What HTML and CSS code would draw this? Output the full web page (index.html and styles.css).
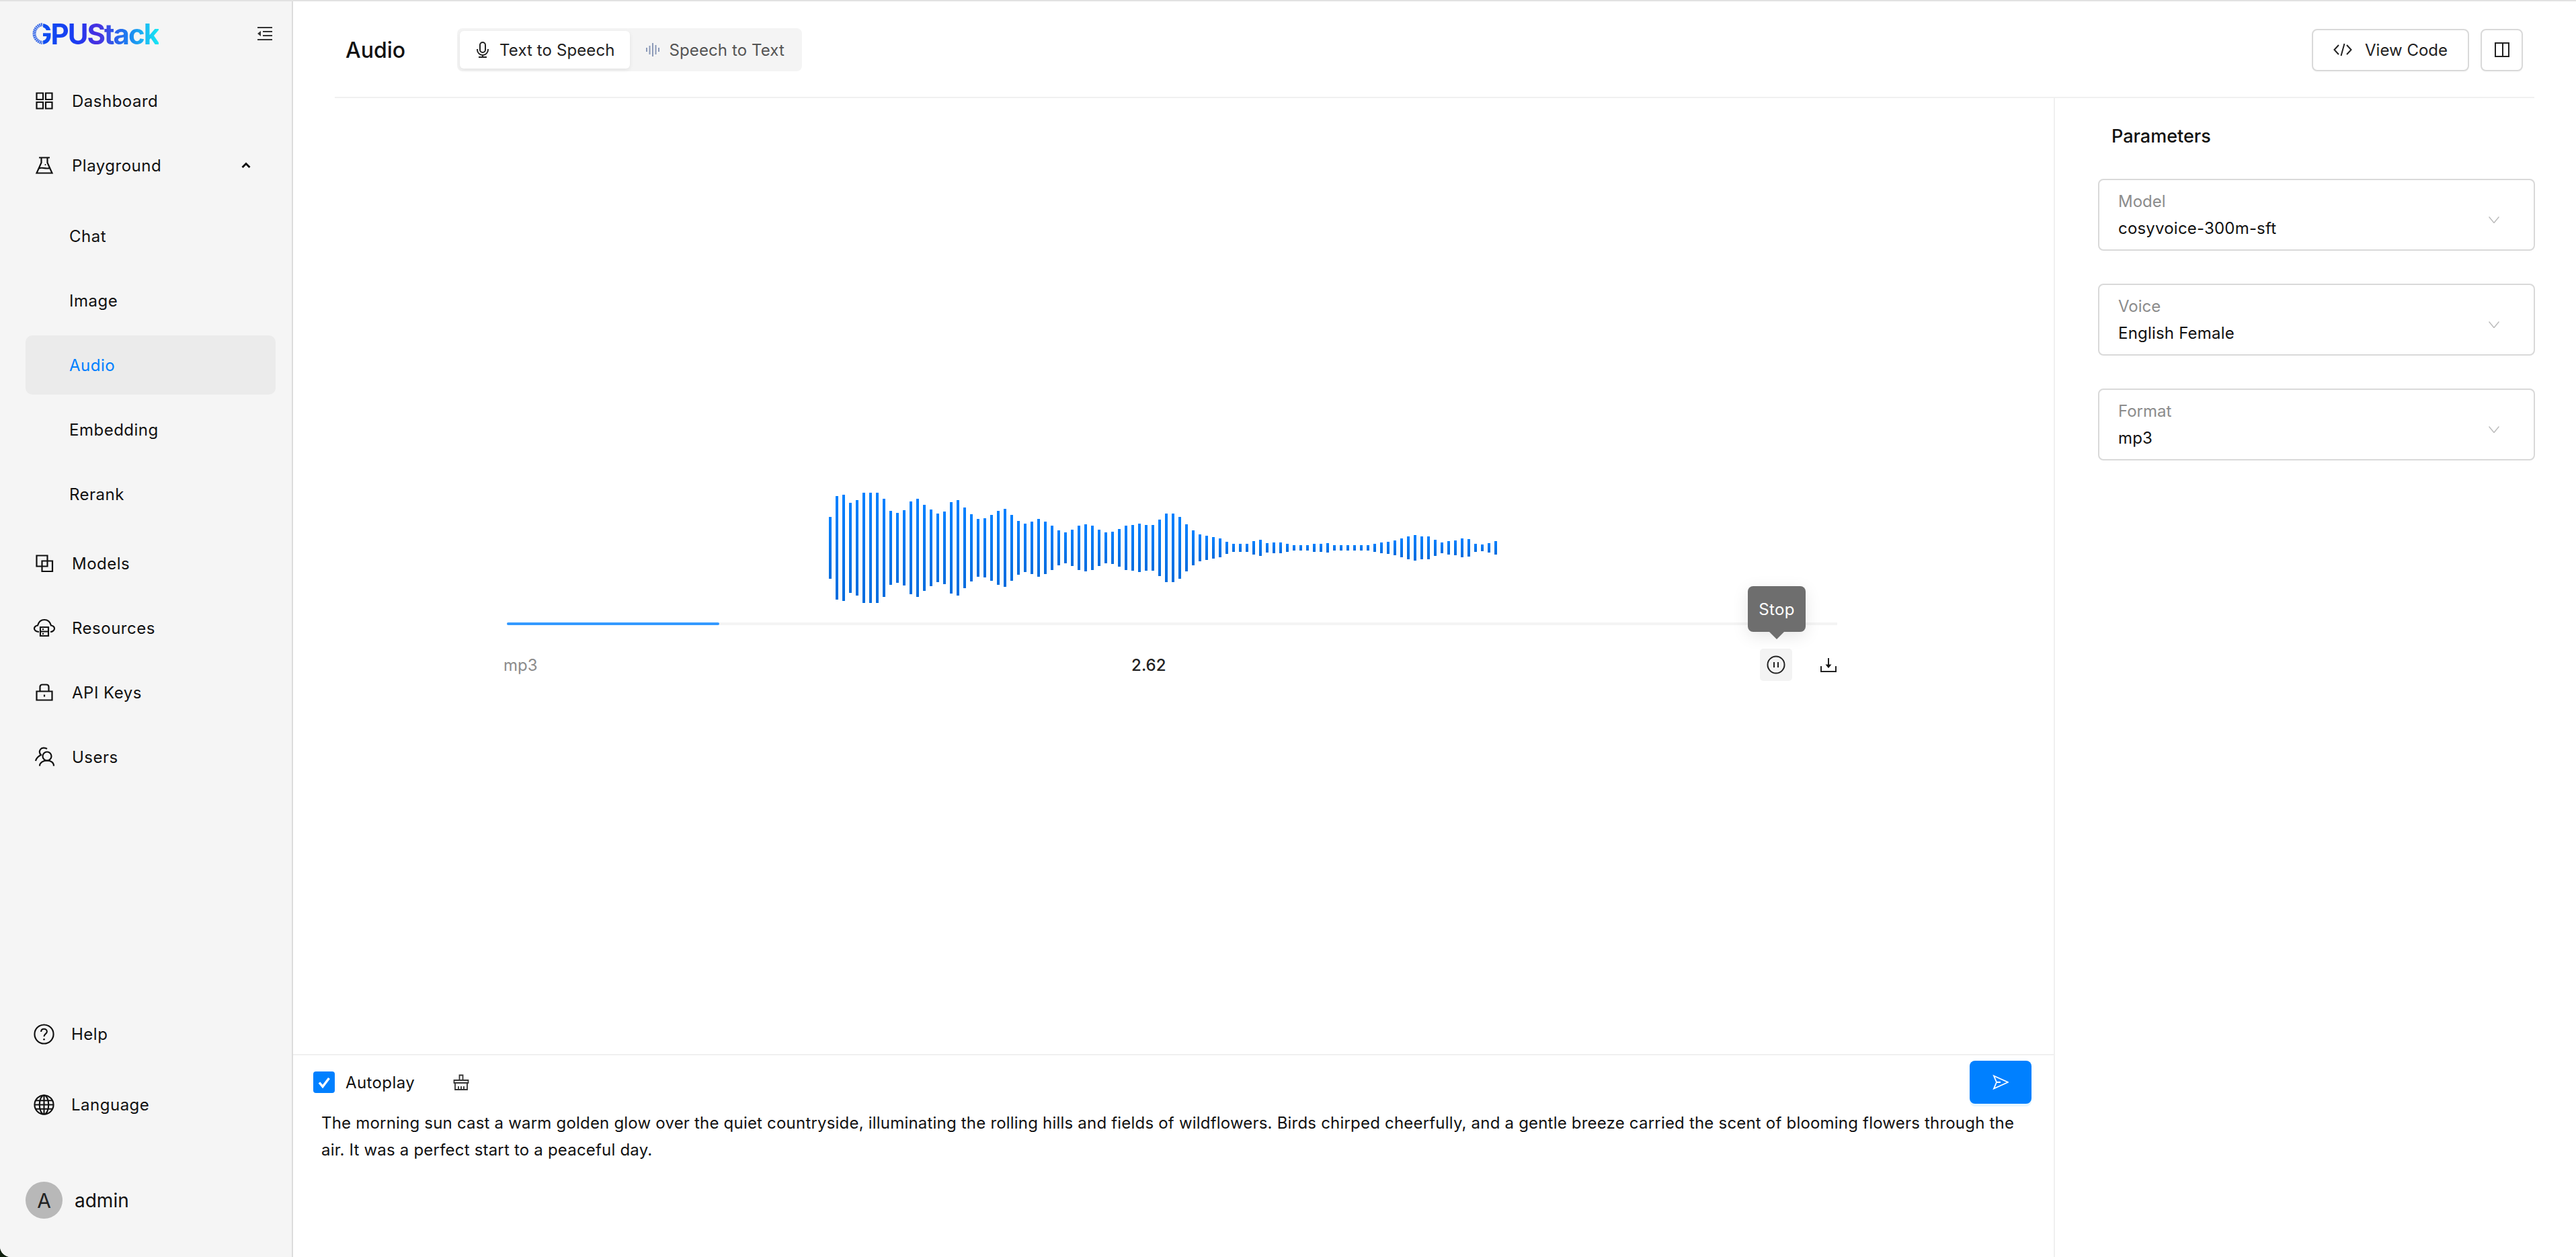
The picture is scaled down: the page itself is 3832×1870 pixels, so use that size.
FILE: index.html
```html
<!DOCTYPE html>
<html lang="en">
<head>
  <meta charset="UTF-8">
  <title>GPUStack - Audio</title>
  <link rel="stylesheet" href="styles.css">
</head>
<body>

  <div class="app">

    <aside class="sidebar">
      <div class="brand">
        <div class="logo">
          <span class="logo-text">GPUStack</span>
          <svg class="logo-ring" viewBox="0 0 18 34">
            <rect width="18" height="34" fill="#f5f5f5"/>
            <path d="M17 3.500A13.600 13.600 0 0 0 17 30.500" fill="none" stroke="#3d6de8" stroke-width="5" stroke-dasharray="2 .7"/>
          </svg>
        </div>
        <svg class="collapse-icon" viewBox="0 0 22 20">
          <path d="M0 1h22M8 7h14M8 13h14M0 19h22" fill="none" stroke="#333" stroke-width="2"/>
          <path d="M0 10l5-4v8z" fill="#333"/>
        </svg>
      </div>

      <nav class="nav">
        <a class="nav-item">
          <svg class="nav-icon" viewBox="0 0 26 26"><path d="M1.500 1.500h9.500v9.500H1.500zM15 1.500h9.500v9.500H15zM1.500 15h9.500v9.500H1.500zM15 15h9.500v9.500H15z"/></svg>
          Dashboard
        </a>
        <a class="nav-item">
          <svg class="nav-icon" viewBox="0 0 26 26"><path d="M5 1.500h16M8.500 1.500v7.500L1.500 24.500h23L17.500 9V1.500M5 17.500c5-2.500 10 1.500 16-.5"/><circle cx="14.500" cy="12" r="1" fill="#111" stroke="none"/></svg>
          Playground
          <svg class="nav-chevron" viewBox="0 0 14 10"><path d="M1.500 8L7 2.500 12.500 8"/></svg>
        </a>
        <div class="subnav">
          <a class="nav-item sub-item">Chat</a>
          <a class="nav-item sub-item">Image</a>
          <a class="nav-item sub-item active">Audio</a>
          <a class="nav-item sub-item">Embedding</a>
          <a class="nav-item sub-item">Rerank</a>
        </div>
        <a class="nav-item">
          <svg class="nav-icon" viewBox="0 0 26 26"><path d="M1.500 1.500h16v16h-16zM9.500 9.500h15.500v15.500H9.500z"/></svg>
          Models
        </a>
        <a class="nav-item">
          <svg class="nav-icon nav-icon-wide" viewBox="0 0 32 26"><path d="M8 19C3.500 19 1 16.500 1 14s2.500-4.500 5-4.500C7.500 4 11 1 16 1s8.500 3 10 8.500c2.500 0 5 2 5 4.500s-2.500 5-6 5"/><path d="M10 12h12v13H10zM10 18.500h12M13 15.200h2M13 21.800h2"/></svg>
          Resources
        </a>
        <a class="nav-item">
          <svg class="nav-icon" viewBox="0 0 26 26"><path d="M1.500 11.500h23v13h-23zM6.500 11.500V5c0-2 1.500-3.500 3.500-3.500h6c2 0 3.500 1.500 3.500 3.500v6.500M13 16.500v3"/></svg>
          API Keys
        </a>
        <a class="nav-item">
          <svg class="nav-icon nav-icon-user" viewBox="0 0 28 28"><circle cx="18" cy="13" r="6.500"/><path d="M7 27.500c0-5 5-8 11-8s10 3 10 8M18 2C15 0 10 0 8 3c-2 3-1 6 1 8-4 2-7 5-8 9"/></svg>
          Users
        </a>
      </nav>

      <div class="sidebar-foot">
        <a class="nav-item">
          <svg class="nav-icon" viewBox="0 0 32 32"><circle cx="16" cy="16" r="14.500"/><path d="M11.500 12.500c0-3 2-4.500 4.500-4.500s4.500 1.700 4.500 4.200c0 3.500-4.500 3.500-4.500 7.300"/><circle cx="16" cy="24" r="1.400" fill="#111" stroke="none"/></svg>
          Help
        </a>
        <a class="nav-item">
          <svg class="nav-icon" viewBox="0 0 32 32"><circle cx="16" cy="16" r="14.500"/><ellipse cx="16" cy="16" rx="7" ry="14.500"/><path d="M16 1.500v29M3 9.500h26M1.500 16h29M3 22.500h26"/></svg>
          Language
        </a>
        <div class="user">
          <span class="avatar">A</span>
          <span class="user-name">admin</span>
        </div>
      </div>
    </aside>

    <main class="main">
      <header class="topbar">
        <h1 class="page-title">Audio</h1>
        <div class="segmented">
          <div class="segment selected">
            <svg class="seg-icon" viewBox="0 0 20 24"><path d="M6 5a4 4 0 0 1 8 0v7a4 4 0 0 1-8 0zM2 11v1a8 8 0 0 0 16 0v-1M10 20v3M4 23h12"/></svg>
            Text to Speech
          </div>
          <div class="segment">
            <svg class="seg-icon wave-icon" viewBox="0 0 20 24"><path d="M1 9v6M5.500 6v13M10 2v20M14.500 5v14M19 9v6"/></svg>
            Speech to Text
          </div>
        </div>
        <div class="topbar-actions">
          <button class="btn">
            <svg class="btn-icon" viewBox="0 0 28 20"><path d="M8 3L1.500 10 8 17M20 3l6.500 7L20 17M16.500 1l-5 18"/></svg>
            View Code
          </button>
          <button class="btn btn-square">
            <svg class="btn-icon panel-icon" viewBox="0 0 22 22"><path d="M1 1h20v20H1zM12 1v20"/></svg>
          </button>
        </div>
      </header>

      <div class="workspace">
        <section class="content">
          <div class="stage">
            <div class="player">
              <div class="waveform">
                <i style="height:92px"></i><i style="height:154px"></i><i style="height:158px"></i><i style="height:134px"></i><i style="height:142px"></i>
                <i style="height:164px"></i><i style="height:164px"></i><i style="height:164px"></i><i style="height:146px"></i><i style="height:110px"></i>
                <i style="height:104px"></i><i style="height:112px"></i><i style="height:138px"></i><i style="height:146px"></i><i style="height:128px"></i>
                <i style="height:114px"></i><i style="height:102px"></i><i style="height:108px"></i><i style="height:136px"></i><i style="height:142px"></i>
                <i style="height:120px"></i><i style="height:100px"></i><i style="height:86px"></i><i style="height:88px"></i><i style="height:98px"></i>
                <i style="height:110px"></i><i style="height:116px"></i><i style="height:98px"></i><i style="height:80px"></i><i style="height:72px"></i>
                <i style="height:78px"></i><i style="height:86px"></i><i style="height:78px"></i><i style="height:66px"></i><i style="height:52px"></i>
                <i style="height:46px"></i><i style="height:54px"></i><i style="height:66px"></i><i style="height:70px"></i><i style="height:66px"></i>
                <i style="height:54px"></i><i style="height:46px"></i><i style="height:48px"></i><i style="height:56px"></i><i style="height:66px"></i>
                <i style="height:68px"></i><i style="height:72px"></i><i style="height:68px"></i><i style="height:68px"></i><i style="height:84px"></i>
                <i style="height:102px"></i><i style="height:102px"></i><i style="height:92px"></i><i style="height:70px"></i><i style="height:52px"></i>
                <i style="height:40px"></i><i style="height:36px"></i><i style="height:32px"></i><i style="height:28px"></i><i style="height:18px"></i>
                <i style="height:12px"></i><i style="height:12px"></i><i style="height:12px"></i><i style="height:20px"></i><i style="height:24px"></i>
                <i style="height:14px"></i><i style="height:16px"></i><i style="height:16px"></i><i style="height:12px"></i><i style="height:8px"></i>
                <i style="height:8px"></i><i style="height:8px"></i><i style="height:12px"></i><i style="height:12px"></i><i style="height:14px"></i>
                <i style="height:8px"></i><i style="height:8px"></i><i style="height:8px"></i><i style="height:8px"></i><i style="height:8px"></i>
                <i style="height:8px"></i><i style="height:12px"></i><i style="height:16px"></i><i style="height:18px"></i><i style="height:22px"></i>
                <i style="height:28px"></i><i style="height:34px"></i><i style="height:38px"></i><i style="height:34px"></i><i style="height:34px"></i>
                <i style="height:24px"></i><i style="height:16px"></i><i style="height:20px"></i><i style="height:22px"></i><i style="height:28px"></i>
                <i style="height:26px"></i><i style="height:12px"></i><i style="height:10px"></i><i style="height:14px"></i><i style="height:20px"></i>
              </div>
              <div class="track"><div class="track-fill"></div></div>
              <div class="meta">
                <span class="meta-format">mp3</span>
                <span class="meta-time">2.62</span>
                <div class="meta-actions">
                  <button class="icon-btn hovered">
                    <svg class="icon-svg" viewBox="0 0 28 28"><circle cx="14" cy="14" r="12.500"/><path d="M11 10v8M17 10v8"/></svg>
                    <span class="tooltip">Stop</span>
                  </button>
                  <button class="icon-btn">
                    <svg class="icon-svg icon-download" viewBox="0 0 24 22"><path d="M1 13v8h22v-8M12 1v13"/><path d="M7.500 10.500h9L12 16z" fill="#111" stroke="none"/></svg>
                  </button>
                </div>
              </div>
            </div>
          </div>

          <div class="composer">
            <div class="composer-bar">
              <label class="autoplay">
                <span class="checkbox">
                  <svg viewBox="0 0 32 32"><path d="M9 16.500l5 6L23.500 10" fill="none" stroke="#fff" stroke-width="3.500"/></svg>
                </span>
                Autoplay
              </label>
              <svg class="broom-icon" viewBox="0 0 24 24"><path d="M9.500 9V1.500h5V9M1.500 9h21v4H1.500zM3 13v10h18V13M8 23v-5M12 23v-5M16 23v-5"/></svg>
              <button class="send-btn">
                <svg viewBox="0 0 24 24"><path d="M2 2.500l21 9.500-21 9.500 4-9.500zM6 12h6" fill="none" stroke="#fff" stroke-width="1.800"/></svg>
              </button>
            </div>
            <div class="prompt">The morning sun cast a warm golden glow over the quiet countryside, illuminating the rolling hills and fields of wildflowers. Birds chirped cheerfully, and a gentle breeze carried the scent of blooming flowers through the air. It was a perfect start to a peaceful day.</div>
          </div>
        </section>

        <aside class="params">
          <h2 class="params-title">Parameters</h2>
          <div class="select">
            <div class="select-text">
              <span class="select-label">Model</span>
              <span class="select-value">cosyvoice-300m-sft</span>
            </div>
            <svg class="select-arrow" viewBox="0 0 16 10"><path d="M.5.5L8 9.500 15.500.5"/></svg>
          </div>
          <div class="select">
            <div class="select-text">
              <span class="select-label">Voice</span>
              <span class="select-value">English Female</span>
            </div>
            <svg class="select-arrow" viewBox="0 0 16 10"><path d="M.5.5L8 9.500 15.500.5"/></svg>
          </div>
          <div class="select">
            <div class="select-text">
              <span class="select-label">Format</span>
              <span class="select-value">mp3</span>
            </div>
            <svg class="select-arrow" viewBox="0 0 16 10"><path d="M.5.5L8 9.500 15.500.5"/></svg>
          </div>
        </aside>
      </div>
    </main>

  </div>

</body>
</html>
```

FILE: styles.css
```css
* {
  box-sizing: border-box;
}

html {
  background: #10200f;
}

body {
  margin: 0;
  font-family: Inter, "Noto Sans", sans-serif;
  font-size: 24px;
  color: #111;
}

.app {
  display: flex;
  height: 100vh;
  background: #fff;
  border-top: 2px solid #e2e2e2;
  border-bottom-left-radius: 16px;
  overflow: hidden;
}

/* sidebar */
.sidebar {
  width: 436px;
  flex-shrink: 0;
  display: flex;
  flex-direction: column;
  padding: 0 24px 0 38px;
  background: #f5f5f5;
  border-right: 2px solid #dcdcdc;
}

.brand {
  height: 104px;
  flex-shrink: 0;
  display: flex;
  align-items: center;
  justify-content: space-between;
  padding: 0 5px 8px 8px;
}

.logo {
  position: relative;
}

.logo-ring {
  position: absolute;
  left: 0;
  top: 8px;
  width: 18px;
  height: 34px;
}

.logo-text {
  font-size: 42px;
  font-weight: 700;
  letter-spacing: -2px;
  background: linear-gradient(90deg, #0a54f0 0%, #1a3cf2 35%, #4a2fe0 52%, #1d7cf0 75%, #18e8f4 100%);
  -webkit-background-clip: text;
  background-clip: text;
  color: transparent;
}

.collapse-icon {
  width: 22px;
  height: 20px;
}

.nav {
  display: flex;
  flex-direction: column;
  gap: 8px;
}

.subnav {
  display: flex;
  flex-direction: column;
  gap: 8px;
  margin: 9px 0 7px;
}

.nav-item {
  height: 88px;
  display: flex;
  align-items: center;
  gap: 28px;
  padding-left: 15px;
  border-radius: 10px;
  letter-spacing: .5px;
  color: #111;
}

.nav-icon {
  width: 26px;
  height: 26px;
  flex-shrink: 0;
  fill: none;
  stroke: #111;
  stroke-width: 2.200;
  overflow: visible;
}

.nav-icon-wide {
  width: 32px;
  margin: 0 -3px;
}

.nav-icon-user {
  width: 28px;
  height: 28px;
  margin: 0 -1px;
}

.nav-chevron {
  width: 14px;
  height: 10px;
  margin-left: auto;
  margin-right: 37px;
  fill: none;
  stroke: #111;
  stroke-width: 3;
}

.sub-item {
  padding-left: 65px;
}

.active {
  background: #ebebeb;
  color: #0080ff;
}

.sidebar-foot {
  margin-top: auto;
  display: flex;
  flex-direction: column;
  gap: 17px;
}

.sidebar-foot .nav-icon {
  width: 31px;
  height: 31px;
  margin-left: -3px;
  margin-right: -3px;
}

.user {
  display: flex;
  align-items: center;
  gap: 18px;
  margin: 54px 0 57px;
}

.avatar {
  width: 55px;
  height: 55px;
  border-radius: 50%;
  background: #b8b8b8;
  color: #222;
  font-size: 30px;
  display: flex;
  align-items: center;
  justify-content: center;
}

.user-name {
  font-size: 28px;
}

/* main area */
.main {
  flex: 1;
  min-width: 0;
  display: flex;
  flex-direction: column;
}

.topbar {
  height: 144px;
  flex-shrink: 0;
  display: flex;
  align-items: center;
  margin: 0 62px;
  padding: 2px 17px 0 16px;
  border-bottom: 2px solid #f0f0f0;
}

.page-title {
  margin: 0 77px 0 0;
  font-size: 32px;
  font-weight: 500;
}

.segmented {
  display: flex;
  height: 64px;
  padding: 4px;
  background: #f4f4f4;
  border-radius: 8px;
}

.segment {
  display: flex;
  align-items: center;
  gap: 15px;
  padding: 0 22px 0 24px;
  color: #555;
  border-radius: 6px;
  letter-spacing: .1px;
}

.selected {
  background: #fff;
  color: #222;
  box-shadow: 0 2px 6px rgba(0, 0, 0, .08);
}

.seg-icon {
  width: 20px;
  height: 24px;
  fill: none;
  stroke: #222;
  stroke-width: 2;
}

.wave-icon {
  stroke: #8c9ab8;
}

.topbar-actions {
  margin-left: auto;
  display: flex;
  gap: 17px;
}

.btn {
  height: 63px;
  display: flex;
  align-items: center;
  gap: 19px;
  padding: 0 30px;
  background: #fff;
  border: 2px solid #d9d9d9;
  border-radius: 8px;
  box-shadow: 0 2px 0 rgba(0, 0, 0, .02);
  font: inherit;
  color: #222;
}

.btn-square {
  width: 63px;
  padding: 0;
  justify-content: center;
}

.btn-icon {
  width: 28px;
  height: 20px;
  fill: none;
  stroke: #222;
  stroke-width: 2;
}

.panel-icon {
  width: 22px;
  height: 22px;
}

.workspace {
  flex: 1;
  min-height: 0;
  display: flex;
}

.content {
  flex: 1;
  min-width: 0;
  display: flex;
  flex-direction: column;
  border-right: 2px solid #f0f0f0;
}

/* audio player */
.stage {
  flex: 1;
  min-height: 0;
  padding: 584px 0 0 313px;
}

.player {
  width: 1995px;
}

.waveform {
  height: 170px;
  display: flex;
  align-items: center;
  gap: 6px;
  padding-left: 484px;
}

.waveform i {
  width: 4px;
  flex-shrink: 0;
  background: linear-gradient(#0080ff, #006cde);
}

.track {
  height: 4px;
  margin: 26px 11px 0 5px;
  background: #f4f4f4;
}

.track-fill {
  width: 316px;
  height: 100%;
  background: #3399ff;
  border-radius: 2px;
}

.meta {
  display: flex;
  align-items: center;
  justify-content: space-between;
  margin-top: 35px;
}

.meta-format {
  color: #8c8c8c;
}

.meta-time {
  font-weight: 500;
  color: #222;
}

.meta-actions {
  display: flex;
  gap: 30px;
}

.icon-btn {
  position: relative;
  width: 48px;
  height: 48px;
  padding: 0;
  display: flex;
  align-items: center;
  justify-content: center;
  background: none;
  border: none;
  border-radius: 5px;
}

.hovered {
  background: #f3f3f3;
}

.icon-svg {
  width: 28px;
  height: 28px;
  fill: none;
  stroke: #222;
  stroke-width: 2;
}

.icon-download {
  width: 24px;
  height: 22px;
}

.tooltip {
  position: absolute;
  left: 50%;
  bottom: 73px;
  margin-left: 1px;
  transform: translateX(-50%);
  width: 86px;
  height: 68px;
  display: flex;
  align-items: center;
  justify-content: center;
  background: #6e6e6e;
  color: #fff;
  font: 24px Inter, sans-serif;
  letter-spacing: .3px;
  border-radius: 8px;
  box-shadow: 0 6px 24px rgba(0, 0, 0, .1);
}

.tooltip::after {
  content: "";
  position: absolute;
  left: 50%;
  top: 100%;
  margin-left: -11px;
  border: 11px solid transparent;
  border-top-color: #6e6e6e;
  border-bottom: 0;
}

/* prompt box */
.composer {
  height: 302px;
  flex-shrink: 0;
  padding: 8px 33px 0 30px;
  border-top: 2px solid #f0f0f0;
}

.composer-bar {
  display: flex;
  align-items: center;
}

.autoplay {
  display: flex;
  align-items: center;
  gap: 16px;
  letter-spacing: .4px;
}

.checkbox {
  width: 32px;
  height: 32px;
  background: #0080ff;
  border-radius: 4px;
}

.checkbox svg {
  display: block;
}

.broom-icon {
  width: 24px;
  height: 24px;
  margin-left: 57px;
  fill: none;
  stroke: #333;
  stroke-width: 1.800;
}

.send-btn {
  width: 92px;
  height: 64px;
  margin-left: auto;
  display: flex;
  align-items: center;
  justify-content: center;
  background: #0080ff;
  border: none;
  border-radius: 8px;
  box-shadow: 0 4px 0 #e6f6ff;
}

.send-btn svg {
  width: 24px;
  height: 24px;
}

.prompt {
  margin-top: 9px;
  padding: 0 0 0 12px;
  line-height: 40px;
  letter-spacing: .2px;
  color: #111;
}

/* parameters panel */
.params {
  width: 775px;
  flex-shrink: 0;
  padding: 0 61px 0 64px;
}

.params-title {
  margin: 38px 0 44px 20px;
  font-size: 27px;
  line-height: 38px;
  font-weight: 500;
  color: #111;
}

.select {
  height: 107px;
  display: flex;
  align-items: center;
  justify-content: space-between;
  margin-bottom: 49px;
  padding: 0 51px 0 28px;
  border: 2px solid #d9d9d9;
  border-radius: 8px;
}

.select-text {
  display: flex;
  flex-direction: column;
  gap: 12px;
}

.select-label {
  line-height: 28px;
  color: #8c8c8c;
}

.select-value {
  line-height: 28px;
  letter-spacing: .2px;
  color: #111;
}

.select-arrow {
  width: 16px;
  height: 10px;
  margin-top: 14px;
  fill: none;
  stroke: #bcbcbc;
  stroke-width: 1.500;
}
```
